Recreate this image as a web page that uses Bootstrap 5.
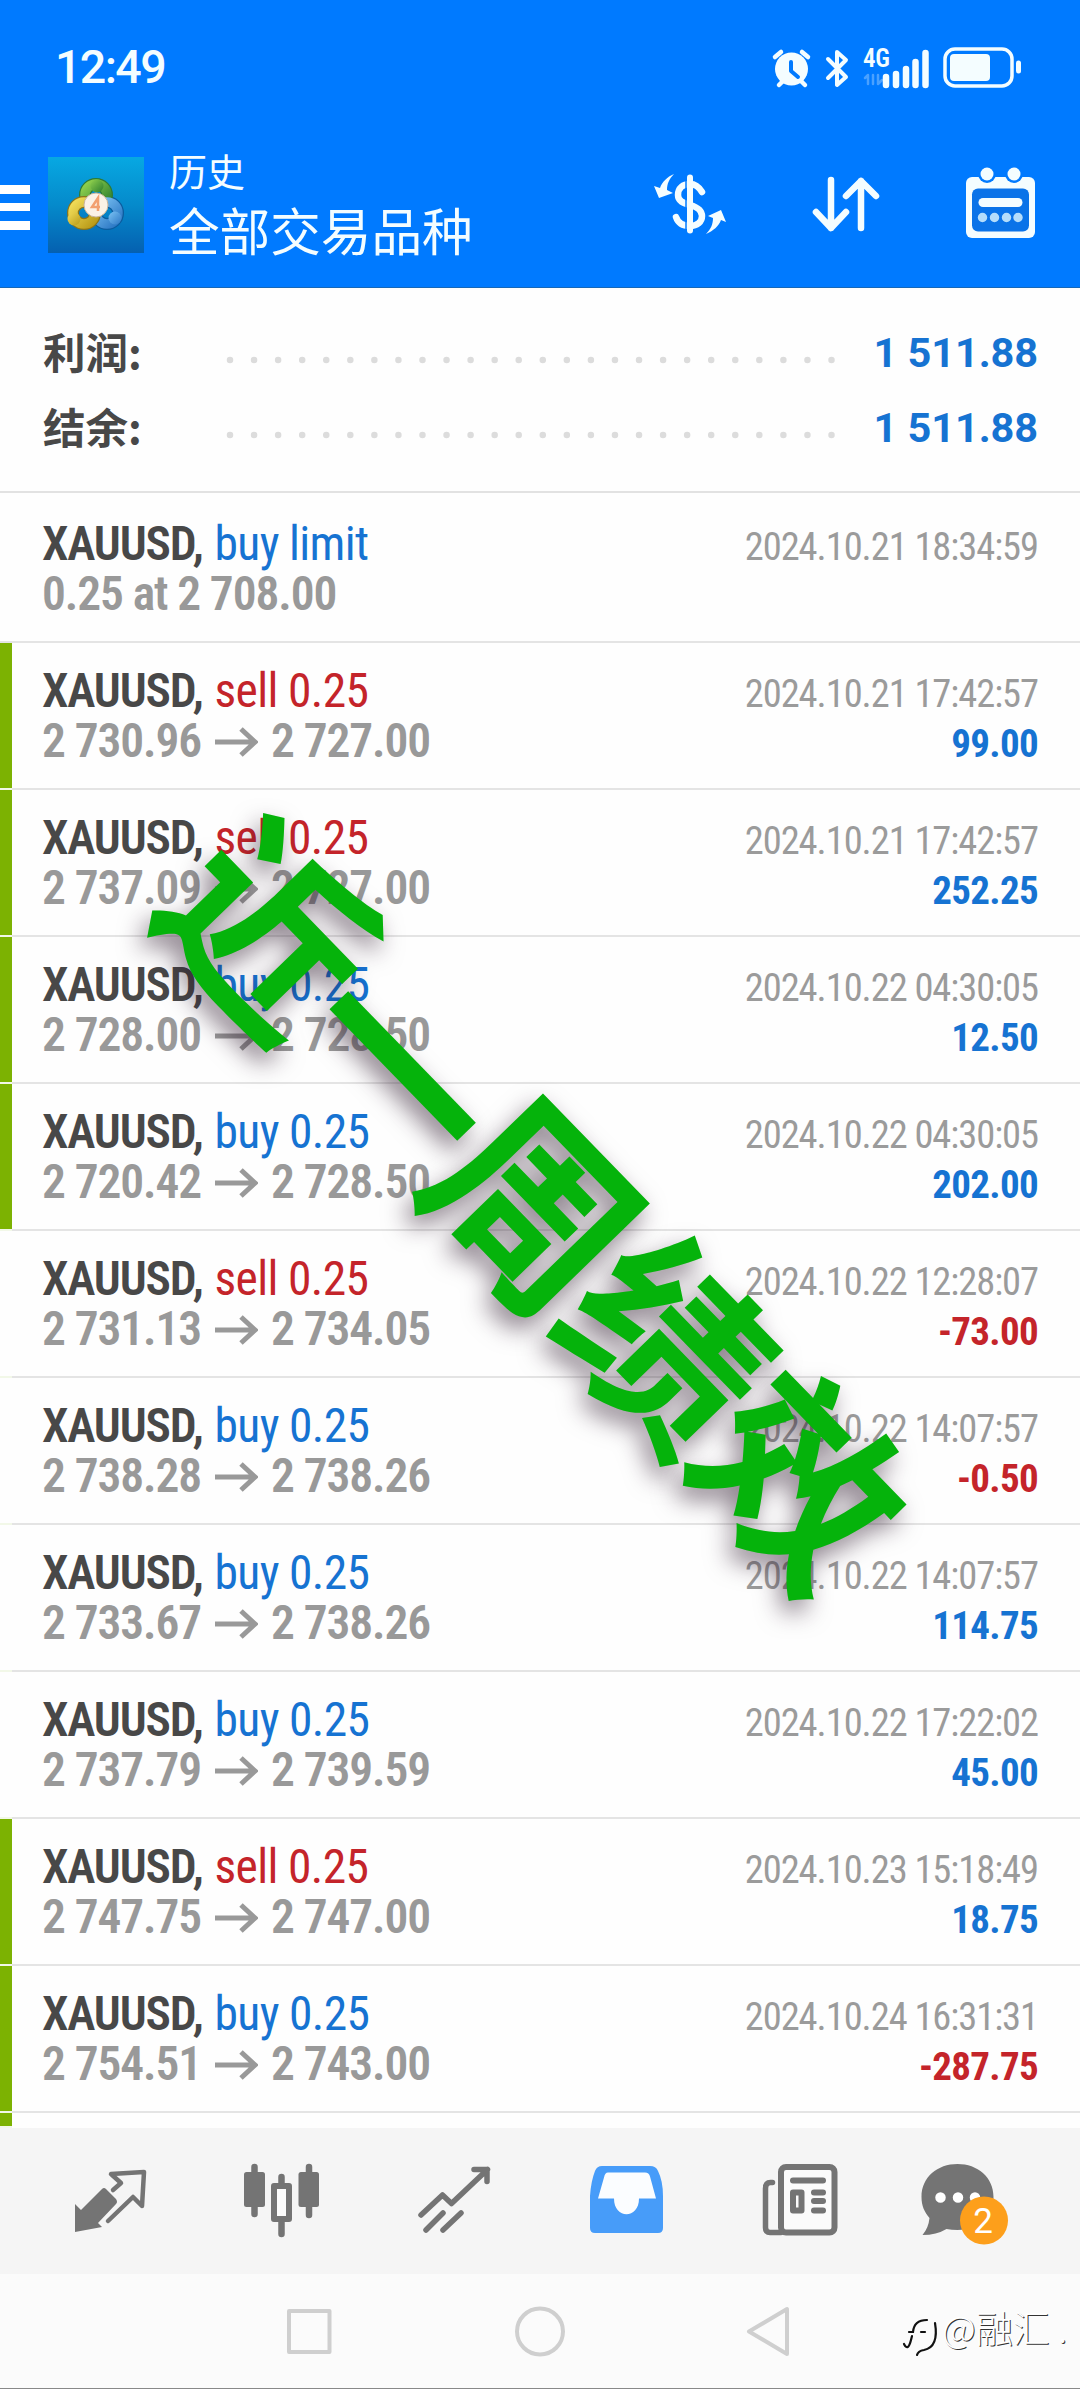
<!DOCTYPE html>
<html lang="zh-CN">
<head>
<meta charset="utf-8">
<meta name="viewport" content="width=device-width, initial-scale=1">
<title>历史</title>
<link href="https://cdn.jsdelivr.net/npm/bootstrap@5.3.0/dist/css/bootstrap.min.css" rel="stylesheet">
<style>
body{width:1080px;height:2389px;overflow:hidden;background:#fefefe;font-family:Roboto,"Noto Sans CJK SC",sans-serif;color:#484848}
svg{display:block;flex:none}
.app{height:2389px}
.topbar{height:288px;background:#007aff;color:#f4fdff;border-bottom:1px solid #1668b8}
.statusline{height:134px;padding:0 58px 0 55px}
.clock{font-size:46.5px;font-weight:500;letter-spacing:-1.6px;line-height:134px}
.heading{height:140px;padding-right:44px}
.titles{margin-left:25px;font-family:"Noto Sans CJK SC",sans-serif}
.t-small{font-size:38px;line-height:50px}
.t-large{font-size:50.6px;line-height:68px}
.summary{height:205px;border-bottom:2px solid #e2e2e2;padding:28px 42px 0 43px}
.sumline{height:75px;font-size:41.5px;font-weight:700}
.sumline .lbl{width:182px;font-family:"Noto Sans CJK SC",sans-serif;font-size:42.5px;padding-bottom:5px}
.sumline svg{margin-top:13px}
.sumline .amt{color:#1673d2;letter-spacing:-.1px}
.trade .strip{width:12px;border-bottom:2px solid #f2f8e8}
.trade.closed .strip{background:#7cb202}
.trade{height:147px}
.trade.first{height:150px}
.trade .inner{border-bottom:2px solid #e4e4e4;padding:22.5px 42px 0 30px;font-family:"Roboto Condensed",Roboto,sans-serif}
.trade.first .inner{padding-top:25.5px}
.trade.first .strip{border-color:#e4e4e4}
.ln{height:50px;line-height:51.5px;font-size:47.5px;white-space:pre}
.sym{font-weight:600;letter-spacing:-1.2px;color:#484848;margin-right:12px}
.side{letter-spacing:-.65px}
.buy{color:#1673d2}.sell{color:#c4242a}
.px{font-weight:600;color:#999;letter-spacing:-1.1px}
.px svg{display:inline-block;margin:0 13px 0 14px;vertical-align:0}
.dt{font-size:38.5px;color:#9b9b9b;letter-spacing:-1.05px}
.val{font-size:39px;font-weight:700;letter-spacing:-.7px}
.trade.partial{height:15px}
.tabs{height:146px;background:#f5f5f5}
.sysnav{height:115px;background:#fbfbfb;border-bottom:1px solid #888}
.banner{position:absolute;left:540px;top:1195px;transform:translate(-50%,-50%) rotate(45.9deg);font:700 198px/1 "Noto Sans CJK SC",sans-serif;letter-spacing:-6.5px;white-space:nowrap;color:#05b30b;text-shadow:4px 12px 24px rgba(40,20,40,.55)}
.sig{position:absolute;left:896px;top:2302px}
.sig span{font:300 37px/50px "Noto Sans CJK SC",sans-serif;color:#fff;text-shadow:1px 1px 0 #333;white-space:pre;padding-bottom:13px}
</style>
</head>
<body>
<div class="app d-flex flex-column position-relative">
<header class="topbar flex-shrink-0">
  <div class="statusline d-flex align-items-center justify-content-between">
    <div class="clock">12:49</div>
    <svg width="254" height="50" viewBox="768 42 254 50" fill="none" stroke="#f4fdff" stroke-linecap="round" stroke-linejoin="round">
      <circle cx="791.500" cy="69" r="16.500" fill="#f4fdff" stroke="none"/>
      <path d="M775 57l6-5M808 57l-6-5M779 85l4-4M805 85l-4-4" stroke-width="4.500"/>
      <path d="M791 62v9l7 6" stroke="#007aff" stroke-width="4"/>
      <path d="M828 59l18 18-9 8V52l9 8-18 18" stroke-width="4"/>
      <text x="863" y="67" font-family="Roboto Condensed" font-weight="600" font-size="25" fill="#f4fdff" stroke="none" textLength="27">4G</text>
      <path d="M868 84V75l-3 3M873 75v9M878 75v9l4-4" stroke-width="2.500" opacity=".3"/>
      <path d="M886 77v8M896 74v11M906 69v16M915.500 62v23M925.500 53v32" stroke-width="6.500"/>
      <rect x="945" y="49" width="67" height="37" rx="10" stroke-width="3.500"/>
      <rect x="950" y="54" width="40" height="27" rx="4" fill="#f4fdff" stroke="none"/>
      <path d="M1018.500 63v8" stroke-width="5"/>
    </svg>
  </div>
  <div class="heading d-flex align-items-center">
    <svg width="144" height="140" viewBox="0 134 144 140">
      <defs>
        <linearGradient id="lg" x1="0" y1="0" x2="0" y2="1"><stop offset="0" stop-color="#07a8e2"/><stop offset=".5" stop-color="#058acb"/><stop offset="1" stop-color="#0560b0"/></linearGradient>
        <linearGradient id="gr" x1="0" y1="0" x2="1" y2="1"><stop offset="0" stop-color="#8fd04d"/><stop offset="1" stop-color="#2b7d2e"/></linearGradient>
        <linearGradient id="ye" x1="0" y1="0" x2="1" y2="1"><stop offset="0" stop-color="#f1dc58"/><stop offset="1" stop-color="#b99a18"/></linearGradient>
        <linearGradient id="bl" x1="0" y1="0" x2="1" y2="1"><stop offset="0" stop-color="#7cc3f4"/><stop offset="1" stop-color="#2b77c4"/></linearGradient>
      </defs>
      <path d="M0 185h30v9H0zM0 203h30v8H0zM0 221h30v9H0z" fill="#fff"/>
      <rect x="48" y="157" width="96" height="96" fill="url(#lg)"/>
      <circle cx="107" cy="213" r="11" fill="none" stroke="#0b5c9e" stroke-width="12"/>
      <circle cx="96" cy="195" r="11" fill="none" stroke="#2f7a34" stroke-width="12"/>
      <circle cx="96" cy="195" r="11" fill="none" stroke="url(#gr)" stroke-width="9.500"/>
      <circle cx="107" cy="213" r="11" fill="none" stroke="url(#bl)" stroke-width="9.500"/>
      <circle cx="84" cy="213" r="11" fill="none" stroke="#8b741a" stroke-width="12"/>
      <circle cx="84" cy="213" r="11" fill="none" stroke="url(#ye)" stroke-width="9.500"/>
      <circle cx="97" cy="186" r="6.500" fill="url(#gr)"/><circle cx="74" cy="219" r="6.500" fill="url(#ye)"/><circle cx="115" cy="218" r="6.500" fill="url(#bl)"/>
      <circle cx="96" cy="205" r="12" fill="#fbf2e6" stroke="#c9b59b"/>
      <path d="M98 211v-13l-6 9h8" fill="none" stroke="#f2a070" stroke-width="2.500"/>
    </svg>
    <div class="titles"><div class="t-small">历史</div><div class="t-large">全部交易品种</div></div>
    <svg class="ms-auto" width="386" height="90" viewBox="650 160 386 90" fill="none" stroke="#f4fdff" stroke-linecap="round" stroke-linejoin="round">
      <path d="M690 178.500v53" stroke-width="6"/>
      <path d="M702 193c-3-5-7-8-12-8-7 0-12 4-12 11 0 6 5 8 12 10 7 2 12 5 12 11s-5 10-12 10-12-3-14-9" stroke-width="6.500"/>
      <path d="M686 180v50" stroke="#007aff" stroke-width="1.500"/>
      <path d="M674 175c-7 3-12 8-14 14l-6-2 5 12 14-5-6-3c0-6 2-11 7-16zM706 235c7-3 13-8 15-14l5 2-5-12-13 6 5 2c0 6-2 11-7 16z" fill="#f4fdff" stroke="none"/>
      <path d="M831 181v48M816 213l15 16 15-16M861 229v-47M846 197l15-15 15 15" stroke-width="6.500"/>
      <rect x="966" y="178" width="69" height="61" rx="6" fill="#f4fdff" stroke="none"/>
      <circle cx="987" cy="175" r="9" fill="#007aff" stroke="none"/><circle cx="1014" cy="175" r="9" fill="#007aff" stroke="none"/>
      <circle cx="987" cy="175" r="6.500" fill="#f4fdff" stroke="none"/><circle cx="1014" cy="175" r="6.500" fill="#f4fdff" stroke="none"/>
      <rect x="972" y="189.500" width="57" height="43" rx="6" fill="#0a73e8" stroke="none"/>
      <path d="M983 203.500h35" stroke-width="9"/>
      <path d="M982.500 218.500h0M994.500 218.500h0M1006.500 218.500h0M1018 218.500h0" stroke="#b4ddfb" stroke-width="9.500"/>
    </svg>
  </div>
</header>
<section class="summary flex-shrink-0">
  <div class="sumline d-flex align-items-center"><span class="lbl">利润:</span>
    <svg width="612" height="8"><path d="M5 4H610" stroke="#dcdcdc" stroke-width="6.500" stroke-linecap="round" stroke-dasharray="0 24.060"/></svg><span class="amt ms-auto">1 511.88</span></div>
  <div class="sumline d-flex align-items-center"><span class="lbl">结余:</span>
    <svg width="612" height="8"><path d="M5 4H610" stroke="#dcdcdc" stroke-width="6.500" stroke-linecap="round" stroke-dasharray="0 24.060"/></svg><span class="amt ms-auto">1 511.88</span></div>
</section>
<svg width="0" height="0" class="position-absolute"><defs><g id="arr" fill="none" stroke="#999" stroke-width="5"><path d="M0 15h40M26 2l14 13-14 13"/></g></defs></svg>
<main class="flex-grow-1 overflow-hidden">
  <div class="trade first d-flex"><div class="strip"></div><div class="inner flex-grow-1">
    <div class="ln d-flex align-items-baseline"><span class="sym">XAUUSD,</span><span class="side buy">buy limit</span><span class="dt ms-auto">2024.10.21 18:34:59</span></div>
    <div class="ln d-flex align-items-baseline"><span class="px">0.25 at 2 708.00</span></div></div></div>
  <div class="trade closed d-flex"><div class="strip"></div><div class="inner flex-grow-1">
    <div class="ln d-flex align-items-baseline"><span class="sym">XAUUSD,</span><span class="side sell">sell 0.25</span><span class="dt ms-auto">2024.10.21 17:42:57</span></div>
    <div class="ln d-flex align-items-baseline"><span class="px">2 730.96<svg width="43" height="30"><use href="#arr"/></svg>2 727.00</span><span class="val buy ms-auto">99.00</span></div></div></div>
  <div class="trade closed d-flex"><div class="strip"></div><div class="inner flex-grow-1">
    <div class="ln d-flex align-items-baseline"><span class="sym">XAUUSD,</span><span class="side sell">sell 0.25</span><span class="dt ms-auto">2024.10.21 17:42:57</span></div>
    <div class="ln d-flex align-items-baseline"><span class="px">2 737.09<svg width="43" height="30"><use href="#arr"/></svg>2 727.00</span><span class="val buy ms-auto">252.25</span></div></div></div>
  <div class="trade closed d-flex"><div class="strip"></div><div class="inner flex-grow-1">
    <div class="ln d-flex align-items-baseline"><span class="sym">XAUUSD,</span><span class="side buy">buy 0.25</span><span class="dt ms-auto">2024.10.22 04:30:05</span></div>
    <div class="ln d-flex align-items-baseline"><span class="px">2 728.00<svg width="43" height="30"><use href="#arr"/></svg>2 728.50</span><span class="val buy ms-auto">12.50</span></div></div></div>
  <div class="trade closed d-flex"><div class="strip"></div><div class="inner flex-grow-1">
    <div class="ln d-flex align-items-baseline"><span class="sym">XAUUSD,</span><span class="side buy">buy 0.25</span><span class="dt ms-auto">2024.10.22 04:30:05</span></div>
    <div class="ln d-flex align-items-baseline"><span class="px">2 720.42<svg width="43" height="30"><use href="#arr"/></svg>2 728.50</span><span class="val buy ms-auto">202.00</span></div></div></div>
  <div class="trade d-flex"><div class="strip"></div><div class="inner flex-grow-1">
    <div class="ln d-flex align-items-baseline"><span class="sym">XAUUSD,</span><span class="side sell">sell 0.25</span><span class="dt ms-auto">2024.10.22 12:28:07</span></div>
    <div class="ln d-flex align-items-baseline"><span class="px">2 731.13<svg width="43" height="30"><use href="#arr"/></svg>2 734.05</span><span class="val sell ms-auto">-73.00</span></div></div></div>
  <div class="trade d-flex"><div class="strip"></div><div class="inner flex-grow-1">
    <div class="ln d-flex align-items-baseline"><span class="sym">XAUUSD,</span><span class="side buy">buy 0.25</span><span class="dt ms-auto">2024.10.22 14:07:57</span></div>
    <div class="ln d-flex align-items-baseline"><span class="px">2 738.28<svg width="43" height="30"><use href="#arr"/></svg>2 738.26</span><span class="val sell ms-auto">-0.50</span></div></div></div>
  <div class="trade d-flex"><div class="strip"></div><div class="inner flex-grow-1">
    <div class="ln d-flex align-items-baseline"><span class="sym">XAUUSD,</span><span class="side buy">buy 0.25</span><span class="dt ms-auto">2024.10.22 14:07:57</span></div>
    <div class="ln d-flex align-items-baseline"><span class="px">2 733.67<svg width="43" height="30"><use href="#arr"/></svg>2 738.26</span><span class="val buy ms-auto">114.75</span></div></div></div>
  <div class="trade d-flex"><div class="strip"></div><div class="inner flex-grow-1">
    <div class="ln d-flex align-items-baseline"><span class="sym">XAUUSD,</span><span class="side buy">buy 0.25</span><span class="dt ms-auto">2024.10.22 17:22:02</span></div>
    <div class="ln d-flex align-items-baseline"><span class="px">2 737.79<svg width="43" height="30"><use href="#arr"/></svg>2 739.59</span><span class="val buy ms-auto">45.00</span></div></div></div>
  <div class="trade closed d-flex"><div class="strip"></div><div class="inner flex-grow-1">
    <div class="ln d-flex align-items-baseline"><span class="sym">XAUUSD,</span><span class="side sell">sell 0.25</span><span class="dt ms-auto">2024.10.23 15:18:49</span></div>
    <div class="ln d-flex align-items-baseline"><span class="px">2 747.75<svg width="43" height="30"><use href="#arr"/></svg>2 747.00</span><span class="val buy ms-auto">18.75</span></div></div></div>
  <div class="trade closed d-flex"><div class="strip"></div><div class="inner flex-grow-1">
    <div class="ln d-flex align-items-baseline"><span class="sym">XAUUSD,</span><span class="side buy">buy 0.25</span><span class="dt ms-auto">2024.10.24 16:31:31</span></div>
    <div class="ln d-flex align-items-baseline"><span class="px">2 754.51<svg width="43" height="30"><use href="#arr"/></svg>2 743.00</span><span class="val sell ms-auto">-287.75</span></div></div></div>
  <div class="trade closed partial d-flex"><div class="strip"></div></div>
</main>
<nav class="tabs flex-shrink-0">
  <svg width="1080" height="146" viewBox="0 2128 1080 146" fill="none" stroke="#747474" stroke-linejoin="round" stroke-linecap="round">
    <path d="M75 2204l6 6 21-21q2-2 4 0l10 10q2 3 0 5l-18 19 4 4-27 5z" fill="#747474" stroke="none"/>
    <path d="M113 2190l8-7-10-9 33-2-2 34-9-9-25 24" stroke-width="4.500"/>
    <path d="M254.500 2167v47M309 2167v48M281.500 2177v57" stroke-width="6.500"/>
    <rect x="244" y="2172" width="21" height="35" rx="2.500" fill="#747474" stroke="none"/>
    <rect x="298.500" y="2172" width="20.500" height="35" rx="2.500" fill="#747474" stroke="none"/>
    <rect x="274" y="2186" width="15" height="33" fill="#fbfbfb" stroke-width="6"/>
    <path d="M421 2215l21.500-20 9 8.500 36-34M474 2169.500h13v12M426 2230l17-17M443 2230l18-17" stroke-width="5.500"/>
    <path d="M602 2166h48q6 0 8 5 5 10 5 25v32q0 5-5 5h-63q-5 0-5-5v-32q1-15 5-25 2-5 7-5z" fill="#479cf9" stroke="none"/>
    <path d="M608 2172.500h37q4 0 5 4l6 22h-17c0 21-25 21-25 0h-16l6-21q1-5 4-5z" fill="#fbfdff" stroke="none"/>
    <rect x="781" y="2167" width="53.500" height="65.500" rx="5" fill="#fbfbfb" stroke-width="6"/>
    <path d="M781 2232.500h-11q-4.500 0-4.500-5v-39q0-6 5-6h2" stroke-width="5.500"/>
    <path d="M793 2180.500h30M814 2192.500h9M814 2201h9M814 2210.500h9" stroke-width="6"/>
    <rect x="793" y="2192.500" width="8.500" height="18" stroke-width="6"/>
    <path d="M957.500 2164c20 0 36 13 36 33s-15 33-36 33q-6 0-11-1-10 6-24 6 6-7 7-17c-5-6-8-12-8-21 0-20 16-33 36-33z" fill="#747474" stroke="none"/>
    <path d="M940.500 2197.500h0M958 2197.500h0M975 2197.500h0" stroke="#fff" stroke-width="10.500"/>
    <circle cx="984" cy="2220.500" r="24" fill="#fd9f1b" stroke="none"/>
    <text x="983" y="2233" text-anchor="middle" font-family="Roboto" font-size="35" fill="#fff" stroke="none">2</text>
  </svg>
</nav>
<footer class="sysnav flex-shrink-0">
  <svg width="1080" height="114" viewBox="0 2274 1080 114" fill="none" stroke="#cfcfcf" stroke-width="4" stroke-linejoin="round">
    <rect x="289" y="2311" width="40.500" height="41"/><circle cx="540" cy="2331.500" r="23"/><path d="M749 2331.500l38-22.500v45z"/>
  </svg>
</footer>
<div class="banner">近一周绩效</div>
<div class="sig d-flex align-items-center">
  <svg width="46" height="58" viewBox="896 2302 46 58" fill="none" stroke="#111" stroke-linecap="round">
    <path d="M909 2329h4q1-12 14-12" stroke-width="2.200"/><path d="M921 2329h4" stroke-width="2.200"/><path d="M904 2341q4 8 7-4l1-4M935 2320q4 24-11 27-6 1-7 5" stroke-width="2.200"/>
  </svg><span>@融汇 .</span>
</div>
</div>
<script src="https://cdn.jsdelivr.net/npm/bootstrap@5.3.0/dist/js/bootstrap.bundle.min.js"></script>
</body>
</html>
